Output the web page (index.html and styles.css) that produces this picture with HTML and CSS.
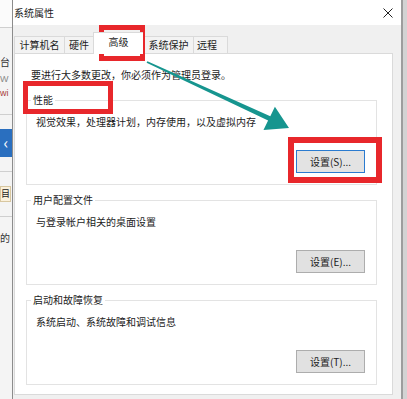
FILE: index.html
```html
<!DOCTYPE html>
<html lang="zh-CN">
<head>
  <meta charset="UTF-8" />
  <meta name="viewport" content="width=device-width, initial-scale=1.0" />
  <title>系统属性</title>
  <link rel="stylesheet" href="styles.css">
</head>
<body>
  <div class="screen">
    <div class="behind">
      <div class="bh-top"></div>
      <div class="bh-text bh-tai">台</div>
      <div class="bh-text bh-w">W</div>
      <div class="bh-text bh-wi">wi</div>
      <div class="bh-line"></div>
      <div class="bh-blue">‹</div>
      <div class="bh-line"></div>
      <div class="bh-box">目</div>
      <div class="bh-line"></div>
      <div class="bh-text bh-de">的</div>
    </div>

    <div class="dialog">
      <div class="titlebar">
        <span class="title">系统属性</span>
        <svg class="close" width="10" height="10" viewBox="0 0 10 10">
          <path d="M0.5 0.5 L9.5 9.5 M9.5 0.5 L0.5 9.5" stroke="#222" stroke-width="1" fill="none"/>
        </svg>
      </div>

      <div class="dialog-body">
        <div class="tabs">
          <div class="tab tab-name">计算机名</div>
          <div class="tab tab-hw">硬件</div>
          <div class="tab tab-adv active">高级</div>
          <div class="tab tab-prot">系统保护</div>
          <div class="tab tab-remote">远程</div>
        </div>

        <div class="panel">
          <p class="note">要进行大多数更改，你必须作为管理员登录。</p>

          <div class="group">
            <div class="group-title">性能</div>
            <p class="desc">视觉效果，处理器计划，内存使用，以及虚拟内存</p>
            <div class="actions"><button class="btn focused">设置(S)...</button></div>
          </div>

          <div class="group">
            <div class="group-title">用户配置文件</div>
            <p class="desc">与登录帐户相关的桌面设置</p>
            <div class="actions"><button class="btn">设置(E)...</button></div>
          </div>

          <div class="group">
            <div class="group-title">启动和故障恢复</div>
            <p class="desc">系统启动、系统故障和调试信息</p>
            <div class="actions"><button class="btn">设置(T)...</button></div>
          </div>
        </div>
      </div>
    </div>

    <div class="edge"></div>

    <!-- annotation layer: red frames + teal arrow -->
    <svg class="marks" width="407" height="399" viewBox="0 0 407 399">
      <g fill="none" stroke="#e8272b">
        <rect x="101.5" y="27.5" width="41" height="31" stroke-width="5"/>
        <rect x="25.5" y="83.5" width="85" height="28" stroke-width="5"/>
        <rect x="291" y="140" width="88" height="40" stroke-width="6"/>
      </g>
      <polygon fill="#16958f"
        points="147.4,61.3 270.3,116.2 274.9,106.7 289,128 263.5,130.1 268.1,120.6 146.6,62.7"/>
    </svg>
  </div>
</body>
</html>
```

FILE: styles.css
```css
:root {
  --dlg-bg: #f0f0f0;
  --line: #dadada;
  --text: #1c1c1c;
  --btn: #e1e1e1;
  --btn-border: #adadad;
}
* {
  margin: 0;
  padding: 0;
  box-sizing: border-box;
  font-family: "Noto Sans CJK SC", "Microsoft YaHei", sans-serif;
}
html, body {
  background: #fff;
  color: var(--text);
  overflow: hidden;
}
.screen {
  position: relative;
  width: 407px;
  height: 399px;
  display: flex;
  overflow: hidden;
  font-size: 10px;
}

/* window behind the dialog, left strip */
.behind {
  width: 12px;
  flex: none;
  background: #f4f4f4;
  display: flex;
  flex-direction: column;
  overflow: hidden;
}
.bh-top {
  height: 28px;
  background: #fbfbfb;
  border-bottom: 1px solid #cfcfcf;
  margin-bottom: 27px;
}
.bh-text {
  line-height: 14px;
  white-space: nowrap;
}
.bh-tai { color: #333; }
.bh-w { margin-top: 3px; color: #888; font-family: "Liberation Sans", sans-serif; font-size: 9px; }
.bh-wi { color: #a84040; font-family: "Liberation Sans", sans-serif; font-size: 9px; }
.bh-line {
  height: 1px;
  background: #cfcfcf;
  margin: 14px 0;
}
.bh-blue {
  height: 28px;
  background: #2a6fbf;
  color: #fff;
  font-size: 16px;
  line-height: 26px;
  text-align: center;
}
.bh-box {
  height: 16px;
  margin-right: 1px;
  background: #fbf1dc;
  border: 1px solid #d8c7a0;
  line-height: 14px;
  font-size: 9px;
  overflow: hidden;
}
.bh-de { color: #333; }

/* dialog */
.dialog {
  width: 389px;
  flex: none;
  border-left: 1px solid #8c8c8c;
  background: var(--dlg-bg);
  display: flex;
  flex-direction: column;
}
.titlebar {
  height: 25px;
  background: #fff;
  display: flex;
  align-items: center;
  justify-content: space-between;
  padding: 0 8px 0 1px;
}
.title {
  line-height: 14px;
}
.close {
  display: block;
}

.dialog-body {
  flex: 1;
  display: flex;
  flex-direction: column;
  padding: 7px 8px 4px 1px;
}

.tabs {
  display: flex;
  align-items: flex-end;
  height: 21px;
}
.tab {
  height: 17px;
  display: flex;
  align-items: center;
  justify-content: center;
  background: #f3f3f3;
  border: 1px solid var(--line);
  border-bottom: none;
  border-right: none;
  line-height: 14px;
  white-space: nowrap;
}
.tab-remote { border-right: 1px solid var(--line); padding-right: 7px; }
.tab-name { width: 50px; }
.tab-hw { width: 29px; }
.tab-adv { width: 50px; }
.tab-prot { width: 50px; }
.tab-remote { width: 35px; }
.tab.active {
  height: 22px;
  margin-bottom: -1px;
  background: #fff;
  position: relative;
  z-index: 1;
  padding-bottom: 3px;
}

.panel {
  flex: 1;
  background: #fff;
  border: 1px solid var(--line);
  padding: 14px 15px 9px 11px;
}
.note {
  line-height: 14px;
  margin-left: 5px;
}

.group {
  margin-top: 15px;
  border: 1px solid #e3e3e3;
  padding: 0 11px 11px 9px;
}
.group:first-of-type {
  margin-top: 18px;
}
.group-title {
  width: fit-content;
  margin: -8px 0 0 -5px;
  padding: 0 2px;
  background: #fff;
  line-height: 14px;
}
.desc {
  margin-top: 8px;
  line-height: 14px;
}
.actions {
  margin-top: 21px;
  display: flex;
  justify-content: flex-end;
}
.btn {
  width: 69px;
  height: 23px;
  border: 1px solid var(--btn-border);
  background: var(--btn);
  color: var(--text);
  font-size: 10px;
  line-height: 14px;
}
.btn.focused {
  border-color: #2a7bd0;
  background: #e3e3e3;
}

/* right-hand edge of the screen */
.edge {
  flex: 1;
  background: #d3d3d3;
  border-left: 2px solid #9d9d9d;
}

.marks {
  position: absolute;
  left: 0;
  top: 0;
  pointer-events: none;
}
```
